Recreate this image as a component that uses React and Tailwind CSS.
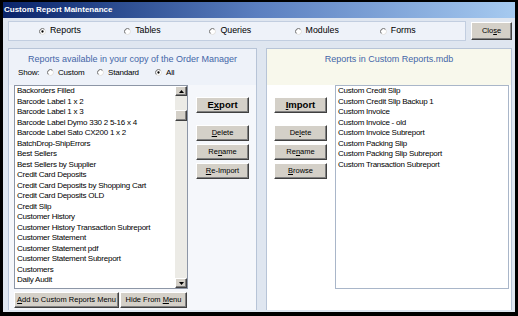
import clsx from "clsx";

const leftReports = [
  "Backorders Filled",
  "Barcode Label 1 x 2",
  "Barcode Label 1 x 3",
  "Barcode Label Dymo 330 2 5-16 x 4",
  "Barcode Label Sato CX200 1 x 2",
  "BatchDrop-ShipErrors",
  "Best Sellers",
  "Best Sellers by Supplier",
  "Credit Card Deposits",
  "Credit Card Deposits by Shopping Cart",
  "Credit Card Deposits OLD",
  "Credit Slip",
  "Customer History",
  "Customer History Transaction Subreport",
  "Customer Statement",
  "Customer Statement pdf",
  "Customer Statement Subreport",
  "Customers",
  "Daily Audit",
  "Daily Audit Check Subreport",
];

const rightReports = [
  "Custom Credit Slip",
  "Custom Credit Slip Backup 1",
  "Custom Invoice",
  "Custom Invoice - old",
  "Custom Invoice Subreport",
  "Custom Packing Slip",
  "Custom Packing Slip Subreport",
  "Custom Transaction Subreport",
];

function Radio({ on }) {
  return (
    <svg width="7" height="7" viewBox="0 0 12 12" className="shrink-0">
      <circle cx="6" cy="6" r="5" fill="#ffffff" />
      <path d="M9.6 2.4 A5 5 0 0 0 2.4 9.6" stroke="#5a5a5a" strokeWidth="1.6" fill="none" />
      <path d="M2.4 9.6 A5 5 0 0 0 9.6 2.4" stroke="#d8d6d0" strokeWidth="1.2" fill="none" />
      {on && <circle cx="6" cy="6" r="2" fill="#000000" />}
    </svg>
  );
}

function Btn({ children, className }) {
  return (
    <div
      className={clsx(
        "flex items-center justify-center bg-[#d4d0c8] border border-t-white border-l-white border-r-[#404040] border-b-[#404040] shadow-[inset_-1px_-1px_0_#808080] text-black whitespace-nowrap",
        className
      )}
    >
      {children}
    </div>
  );
}

function Scrollbar() {
  return (
    <div className="w-[12px] h-full flex flex-col bg-[#ecebe6]">
      <Btn className="h-[10px] w-[12px]">
        <svg width="5" height="3" viewBox="0 0 5 3">
          <path d="M2.5 0 L5 3 L0 3 Z" fill="#000" />
        </svg>
      </Btn>
      <div className="h-[14px]" />
      <Btn className="h-[11px] w-[12px]" />
      <div className="flex-1" />
      <Btn className="h-[10px] w-[12px]">
        <svg width="5" height="3" viewBox="0 0 5 3">
          <path d="M0 0 L5 0 L2.5 3 Z" fill="#000" />
        </svg>
      </Btn>
    </div>
  );
}

function TopRadio({ label, on }) {
  return (
    <div className="w-[90px] flex items-center gap-[4px]">
      <Radio on={on} />
      <span>{label}</span>
    </div>
  );
}

export default function App() {
  return (
    <div className="w-[518px] h-[316px] bg-black pt-[2px] pl-[3px] pr-[3px] pb-[4px] flex flex-col font-['Liberation_Sans',Arial,sans-serif] text-black overflow-hidden">
      <div className="h-[16px] flex items-center pl-[1px] bg-gradient-to-r from-[#0a246a] via-[#5b7fc0] to-[#a6caf0] text-white font-bold text-[8px]">
        Custom Report Maintenance
      </div>

      <div className="flex-1 flex flex-col bg-[#dfe6f0] pl-[5px] pr-[3px] pt-[3px] pb-[2px]">
        {/* object type selector */}
        <div className="flex items-start gap-[5px]">
          <div className="w-[458px] h-[20px] bg-[#eef2f9] border border-[#c2cee0] flex items-center pl-[30px] text-[8.8px]">
            <TopRadio label="Reports" on />
            <TopRadio label="Tables" />
            <TopRadio label="Queries" />
            <TopRadio label="Modules" />
            <TopRadio label="Forms" />
          </div>
          <Btn className="w-[41px] h-[18px] mt-[1px] text-[7.5px]">
            <span>
              Clo<u>s</u>e
            </span>
          </Btn>
        </div>

        <div className="flex-1 flex gap-[9px] mt-[7px]">
          {/* left panel */}
          <div className="w-[249px] bg-[#f5f7fb] border border-b-0 border-[#b7c4d7] flex flex-col">
            <div className="h-[36px] pt-[5px] bg-[#eef2f9]">
              <div className="h-[11px] leading-[11px] text-center text-[9px] text-[#4466a8]">
                Reports available in your copy of the Order Manager
              </div>
              <div className="h-[11px] mt-[2px] pl-[9px] flex items-center text-[8px] tracking-[-0.2px]">
                <span className="w-[29px]">Show:</span>
                <div className="w-[50px] flex items-center gap-[4px]">
                  <Radio />
                  <span>Custom</span>
                </div>
                <div className="w-[58px] flex items-center gap-[4px]">
                  <Radio />
                  <span>Standard</span>
                </div>
                <div className="flex items-center gap-[4px]">
                  <Radio on />
                  <span>All</span>
                </div>
              </div>
            </div>

            <div className="flex pl-[5px]">
              <div className="w-[174px] h-[204px] bg-white border border-[#8d96a6] flex overflow-hidden">
                <div className="flex-1 pl-[2px] text-[8px] leading-[10.5px] tracking-[-0.25px] overflow-hidden">
                  {leftReports.map((r) => (
                    <div key={r} className="h-[10.5px] whitespace-nowrap">
                      {r}
                    </div>
                  ))}
                </div>
                <Scrollbar />
              </div>

              <div className="ml-[8px] pt-[12px] flex flex-col text-[7.5px]">
                <Btn className="w-[53px] h-[16px] font-bold text-[9.5px]">
                  <span>
                    E<u>x</u>port
                  </span>
                </Btn>
                <Btn className="w-[53px] h-[16px] mt-[12px]">
                  <span>
                    <u>D</u>elete
                  </span>
                </Btn>
                <Btn className="w-[53px] h-[16px] mt-[3px]">
                  <span>
                    Re<u>n</u>ame
                  </span>
                </Btn>
                <Btn className="w-[53px] h-[16px] mt-[3px]">
                  <span>
                    <u>R</u>e-Import
                  </span>
                </Btn>
              </div>
            </div>

            <div className="flex gap-[1px] pl-[5px] mt-[3px] text-[7.5px]">
              <Btn className="w-[105px] h-[16px]">
                <span>
                  <u>A</u>dd to Custom Reports Menu
                </span>
              </Btn>
              <Btn className="w-[67px] h-[16px]">
                <span>
                  Hide From <u>M</u>enu
                </span>
              </Btn>
            </div>
          </div>

          {/* right panel */}
          <div className="w-[246px] bg-white border border-b-0 border-[#b7c4d7] flex flex-col">
            <div className="h-[36px] pt-[5px] bg-[#f8f8ec]">
              <div className="h-[11px] leading-[11px] text-center text-[9px] text-[#4466a8]">
                Reports in Custom Reports.mdb
              </div>
            </div>

            <div className="flex pl-[7px]">
              <div className="pt-[12px] flex flex-col text-[7.5px]">
                <Btn className="w-[53px] h-[16px] font-bold text-[9.5px]">
                  <span>
                    <u>I</u>mport
                  </span>
                </Btn>
                <Btn className="w-[53px] h-[16px] mt-[12px]">
                  <span>
                    De<u>l</u>ete
                  </span>
                </Btn>
                <Btn className="w-[53px] h-[16px] mt-[3px]">
                  <span>
                    Re<u>n</u>ame
                  </span>
                </Btn>
                <Btn className="w-[53px] h-[16px] mt-[3px]">
                  <span>
                    <u>B</u>rowse
                  </span>
                </Btn>
              </div>

              <div className="ml-[8px] w-[174px] h-[204px] bg-white border border-[#a9b6c9] pl-[2px] text-[8px] leading-[10.5px] tracking-[-0.25px] overflow-hidden">
                {rightReports.map((r) => (
                  <div key={r} className="h-[10.5px] whitespace-nowrap">
                    {r}
                  </div>
                ))}
              </div>
            </div>
          </div>
        </div>
      </div>
    </div>
  );
}
